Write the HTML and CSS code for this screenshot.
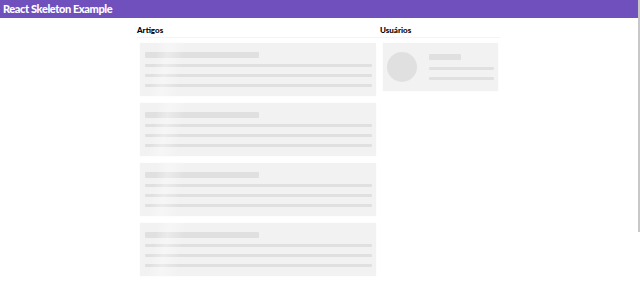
FILE: index.html
```html
<!DOCTYPE html>
<html lang="en">
<head>
    <meta charset="UTF-8">
    <meta name="viewport" content="width=device-width, initial-scale=1.0">
    <title>React Skeleton Example</title>
    <link rel="stylesheet" href="styles.css">
</head>
<body>
    <header>
        <h1>React Skeleton Example</h1>
    </header>

    <div class="content">
        <div class="articles">
            <h2>Artigos</h2>
            <div class="skeleton-article">
                <div class="skeleton title"></div>
                <div class="skeleton text"></div>
                <div class="skeleton text"></div>
                <div class="skeleton text"></div>
                <div class="shimmer"></div>
            </div>
            <div class="skeleton-article">
                <div class="skeleton title"></div>
                <div class="skeleton text"></div>
                <div class="skeleton text"></div>
                <div class="skeleton text"></div>
                <div class="shimmer"></div>
            </div>
            <div class="skeleton-article">
                <div class="skeleton title"></div>
                <div class="skeleton text"></div>
                <div class="skeleton text"></div>
                <div class="skeleton text"></div>
                <div class="shimmer"></div>
            </div>
            <div class="skeleton-article">
                <div class="skeleton title"></div>
                <div class="skeleton text"></div>
                <div class="skeleton text"></div>
                <div class="skeleton text"></div>
                <div class="shimmer"></div>
            </div>
            <div class="skeleton-article">
                <div class="skeleton title"></div>
                <div class="skeleton text"></div>
                <div class="skeleton text"></div>
                <div class="skeleton text"></div>
                <div class="shimmer"></div>
            </div>
        </div>

        <div class="profile">
            <h2>Usuários</h2>
            <div class="skeleton-profile">
                <div class="skeleton avatar"></div>
                <div class="profile-info">
                    <div class="skeleton title"></div>
                    <div class="skeleton text"></div>
                    <div class="skeleton text"></div>
                </div>
            </div>
        </div>
    </div>

    <div class="scroll-thumb"></div>
</body>
</html>
```

FILE: styles.css
```css
body {
    margin: 0;
    padding-right: 3px;
    font-family: Lato, Arial, sans-serif;
    background: #fff;
    color: #000;
}
header {
    background: #6f50bc;
    height: 18px;
    padding: 0 3px;
    margin-right: -3px;
}
header h1 {
    margin: 0;
    color: #fff;
    font-size: 11px;
    letter-spacing: -0.4px;
    line-height: 18px;
    font-weight: 900;
}
.content {
    width: 363px;
    margin: 0 auto;
    display: grid;
    grid-template-columns: 243px 120px;
    padding-bottom: 7px;
}
h2 {
    margin: 0 0 5px;
    font-size: 8px;
    font-weight: 900;
    line-height: 12px;
    padding-top: 6px;
    padding-bottom: 1px;
    border-bottom: 1px solid #f4f4f4;
}
.skeleton-article,
.skeleton-profile {
    position: relative;
    overflow: hidden;
    background: #f2f2f2;
    margin: 0 2px 7px 3px;
    box-shadow: 0 0 1px rgba(0, 0, 0, 0.06);
}
.skeleton-article {
    margin-right: 4px;
    padding: 9px 4px 9px 5px;
    height: 35px;
}
.skeleton {
    background: #e0e0e0;
    border-radius: 1px;
}
.skeleton.title {
    width: 114px;
    height: 6px;
    margin-bottom: 6px;
}
.skeleton.text {
    height: 3px;
    margin-bottom: 7px;
}
.skeleton.text:last-of-type {
    margin-bottom: 0;
}
.shimmer {
    position: absolute;
    top: 0;
    left: 0;
    width: 100%;
    height: 100%;
    background: linear-gradient(100deg, transparent 7%, rgba(255, 255, 255, 0.35) 12%, transparent 19%);
}
.skeleton-profile {
    display: flex;
    align-items: flex-start;
    gap: 12px;
    padding: 9px 4px;
}
.skeleton.avatar {
    width: 30px;
    height: 30px;
    border-radius: 50%;
    flex-shrink: 0;
}
.profile-info {
    flex: 1;
    padding-top: 2px;
}
.profile-info .skeleton.title {
    width: 32px;
    height: 6px;
    margin-bottom: 7px;
}
/* fake overlay scrollbar thumb as in the capture */
.scroll-thumb {
    position: fixed;
    top: 0;
    right: 0;
    width: 2px;
    height: 232px;
    background: #c8c8c8;
}
```
